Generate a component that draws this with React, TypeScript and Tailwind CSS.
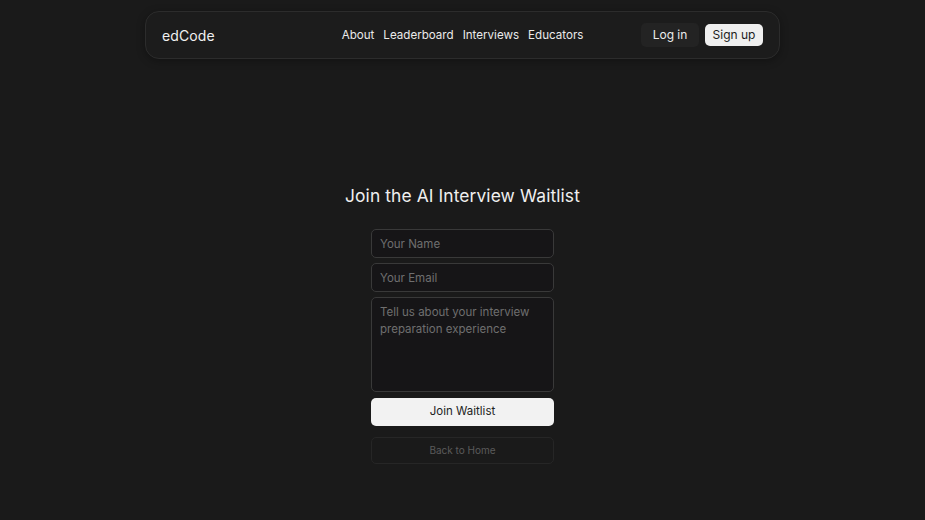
import React from 'react';

const font = { fontFamily: 'Inter, "Open Sans", sans-serif' };

export default function App() {
  return (
    <div className="min-h-[520px] w-full bg-[#1a1a1a] text-[#ededed] pt-[11px]" style={font}>
      {/* Navbar */}
      <header className="mx-auto w-[635px] h-[48px] rounded-[14px] border border-[#2c2c2c] bg-[#1c1c1c] flex items-center px-[16px] shadow-[0_2px_8px_rgba(0,0,0,0.3)]">
        <div className="flex-1 text-[14px] tracking-[0.1px] text-[#f0f0f0]">edCode</div>
        <nav className="flex items-center gap-[9px] pt-[2px] text-[11.6px] text-[#eaeaea]">
          <a>About</a>
          <a>Leaderboard</a>
          <a>Interviews</a>
          <a>Educators</a>
        </nav>
        <div className="flex-1 flex justify-end items-center gap-[6px]">
          <button className="h-[24px] w-[58px] rounded-[5px] bg-[#232323] text-[12px] text-[#ececec]">Log in</button>
          <button className="h-[22px] w-[58px] rounded-[5px] bg-[#efefef] text-[12px] text-[#1c1c1c]">Sign up</button>
        </div>
      </header>

      {/* Waitlist form */}
      <main className="flex flex-col items-center pt-[125px]">
        <h1 className="text-[17.4px] leading-[24px] text-[#efefef] tracking-[0.1px]">Join the AI Interview Waitlist</h1>
        <form className="mt-[21px] w-[183px] flex flex-col gap-[5px]">
          <input
            placeholder="Your Name"
            className="h-[29px] rounded-[5px] border border-[#393939] bg-[#161517] px-[8px] text-[11.5px] text-[#ddd] placeholder:text-[#6f6f6f] outline-none"
          />
          <input
            placeholder="Your Email"
            className="h-[29px] rounded-[5px] border border-[#393939] bg-[#161517] px-[8px] text-[11.5px] text-[#ddd] placeholder:text-[#6f6f6f] outline-none"
          />
          <textarea
            placeholder="Tell us about your interview preparation experience"
            className="h-[95px] resize-none rounded-[5px] border border-[#393939] bg-[#161517] px-[8px] py-[6px] text-[11.5px] leading-[16.5px] text-[#ddd] placeholder:text-[#6f6f6f] outline-none"
          />
          <button type="button" className="mt-[1px] h-[28px] rounded-[5px] bg-[#f2f2f2] text-[11.5px] text-[#222]">Join Waitlist</button>
          <button type="button" className="mt-[6px] h-[27px] rounded-[5px] border border-[#262626] bg-[#1a1a1a] text-[10px] text-[#5a5a5a]">Back to Home</button>
        </form>
      </main>
    </div>
  );
}
